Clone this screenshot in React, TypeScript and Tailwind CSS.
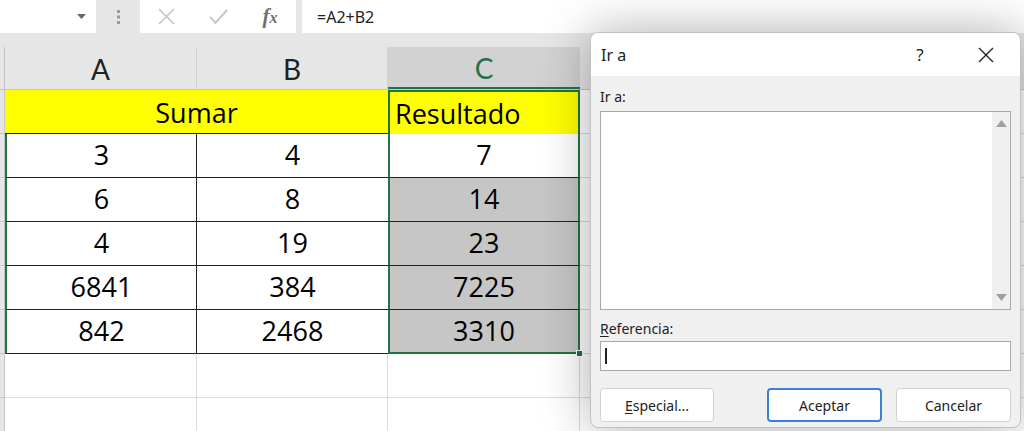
import React from "react";

const rows: [string, string, string][] = [
  ["3", "4", "7"],
  ["6", "8", "14"],
  ["4", "19", "23"],
  ["6841", "384", "7225"],
  ["842", "2468", "3310"],
];

const cellFont = { fontFamily: '"Open Sans", "Noto Sans", sans-serif' };

function FormulaBar() {
  return (
    <div className="h-[47px] bg-[#e6e6e6] flex items-start">
      <div className="w-[96px] h-[33px] bg-white flex items-center justify-end pr-[10px]">
        <svg width="9" height="5" viewBox="0 0 9 5"><path d="M0 0h9L4.5 5z" fill="#666" /></svg>
      </div>
      <div className="w-[44px] h-[33px] flex items-center justify-center">
        <svg width="3" height="14" viewBox="0 0 3 14">
          <rect x="0" y="0" width="3" height="3" fill="#9a9a9a" />
          <rect x="0" y="5.5" width="3" height="3" fill="#9a9a9a" />
          <rect x="0" y="11" width="3" height="3" fill="#9a9a9a" />
        </svg>
      </div>
      <div className="w-[156px] h-[33px] bg-white flex items-center">
        <div className="w-[52px] flex justify-center pl-[1px]">
          <svg width="17" height="17" viewBox="0 0 17 17"><path d="M1 1L16 16M16 1L1 16" stroke="#c6c6c6" strokeWidth="1.7" /></svg>
        </div>
        <div className="w-[52px] flex justify-center">
          <svg width="19" height="15" viewBox="0 0 19 15"><path d="M1 8L6.5 14L18 1" stroke="#c6c6c6" strokeWidth="1.9" fill="none" /></svg>
        </div>
        <div className="w-[52px] flex justify-center">
          <span className="text-[21px] italic font-bold text-[#707070] leading-none" style={{ fontFamily: '"Liberation Serif", serif' }}>
            f<span className="text-[16px]">x</span>
          </span>
        </div>
      </div>
      <div className="w-[6px]" />
      <div className="flex-1 h-[33px] bg-white flex items-center pl-[15px] text-[16px] text-[#222]" style={{ fontFamily: '"Noto Sans", sans-serif' }}>
        =A2+B2
      </div>
    </div>
  );
}

function App() {
  return (
    <div className="w-[1024px] h-[431px] relative overflow-hidden bg-white" style={{ fontFamily: 'Lato, "Noto Sans", sans-serif' }}>
      <FormulaBar />
      {/* Column headers */}
      <div className="flex h-[43px] bg-[#e6e6e6] border-b border-[#c6c6c6]">
        <div className="w-[5px] border-r border-[#c6c6c6]" />
        <div className="w-[192px] border-r border-[#d0d0d0] flex items-center justify-center text-[28px] text-[#222] pt-[2px]">A</div>
        <div className="w-[191px] border-r border-[#d0d0d0] flex items-center justify-center text-[28px] text-[#222] pt-[2px]">B</div>
        <div className="w-[192px] bg-[#d2d2d2] border-b-2 border-[#217346] flex items-center justify-center text-[28px] text-[#217346] pt-[2px]">C</div>
        <div className="flex-1" />
      </div>
      {/* Grid */}
      <div className="flex" style={cellFont}>
        <div className="w-[5px] bg-[#e6e6e6] flex flex-col">
          {Array.from({ length: 8 }).map((_, i) => (
            <div key={i} className="h-[44px] border-b border-r border-[#c6c6c6]" />
          ))}
        </div>
        <div className="flex flex-col">
          {/* Row 1 */}
          <div className="flex h-[44px]">
            <div className="w-[383px] bg-[#ffff00] border-b-[1.5px] border-[#222] flex items-center justify-center text-[27px] text-black pt-[3px]">Sumar</div>
            <div className="w-[192px] bg-[#ffff00] border-2 border-b-0 border-[#217346] flex items-center pl-[5px] text-[27px] text-black pt-[3px]">Resultado</div>
          </div>
          {rows.map((r, i) => (
            <div key={i} className="flex h-[44px]">
              <div className="w-[192px] border-l-2 border-l-[#217346] border-r-[1.5px] border-r-[#222] border-b-[1.5px] border-b-[#222] flex items-center justify-center text-[27px] text-black">{r[0]}</div>
              <div className="w-[191px] border-b-[1.5px] border-[#222] flex items-center justify-center text-[27px] text-black">{r[1]}</div>
              <div className={`w-[192px] border-x-2 border-x-[#217346] ${i === rows.length - 1 ? "border-b-2 border-b-[#217346]" : "border-b-[1.5px] border-b-[#222]"} ${i === 0 ? "bg-white" : "bg-[#c6c6c6]"} flex items-center justify-center text-[27px] text-black relative`}>
                {r[2]}
                {i === rows.length - 1 && (
                  <div className="absolute right-[-5px] bottom-[-5px] w-[7px] h-[7px] bg-[#217346] border border-white" />
                )}
              </div>
            </div>
          ))}
          {[0, 1].map((i) => (
            <div key={i} className="flex h-[44px]">
              <div className="w-[192px] border-r border-b border-[#dadada]" />
              <div className="w-[191px] border-r border-b border-[#dadada]" />
              <div className="w-[192px] border-r border-b border-[#dadada]" />
            </div>
          ))}
        </div>
        <div className="flex-1 flex flex-col">
          {Array.from({ length: 8 }).map((_, i) => (
            <div key={i} className="h-[44px] border-b border-[#dadada]" />
          ))}
        </div>
      </div>

      {/* Dialog */}
      <div
        className="absolute left-[590px] top-[32px] w-[431px] h-[396px] rounded-[8px] overflow-hidden border border-[#c0c0c0] bg-[#f0f0f0] shadow-[0_0_50px_rgba(0,0,0,0.32)] flex flex-col"
        style={{ fontFamily: '"Noto Sans", "Open Sans", sans-serif' }}
      >
        <div className="h-[43px] bg-white flex items-center pl-[10px] pr-[26px] text-[16px] text-[#222]">
          <span className="flex-1 pt-[1px]">Ir a</span>
          <span className="w-[20px] text-center text-[17px] mr-[48px]">?</span>
          <svg width="16" height="16" viewBox="0 0 16 16"><path d="M1 1L15 15M15 1L1 15" stroke="#222" strokeWidth="1.4" /></svg>
        </div>
        <div className="flex-1 px-[9px] pt-[11px] flex flex-col">
          <div className="text-[14px] text-[#222] leading-[20px] h-[24px]">Ir a:</div>
          <div className="h-[199px] border border-[#a8a8a8] bg-white flex">
            <div className="flex-1" />
            <div className="w-[18px] bg-[#f0f0f0] flex flex-col items-center justify-between py-[8px]">
              <svg width="11" height="7" viewBox="0 0 11 7"><path d="M0 7L5.5 0L11 7z" fill="#a0a0a0" /></svg>
              <svg width="11" height="7" viewBox="0 0 11 7"><path d="M0 0L5.5 7L11 0z" fill="#a0a0a0" /></svg>
            </div>
          </div>
          <div className="text-[14px] text-[#222] leading-[20px] mt-[9px] h-[22px]"><span className="underline underline-offset-2">R</span>eferencia:</div>
          <div className="h-[30px] border border-[#a8a8a8] bg-white flex items-center pl-[4px]">
            <div className="w-[1.5px] h-[16px] bg-[#222]" />
          </div>
          <div className="flex mt-[17px] text-[14px] text-[#222]">
            <div className="w-[114px] h-[34px] rounded-[4px] bg-white border border-[#d2d2d2] flex items-center justify-center"><span><span className="underline underline-offset-2">E</span>special...</span></div>
            <div className="w-[53px]" />
            <div className="w-[115px] h-[34px] rounded-[4px] bg-white border-2 border-[#3b82d6] flex items-center justify-center">Aceptar</div>
            <div className="w-[14px]" />
            <div className="w-[115px] h-[34px] rounded-[4px] bg-white border border-[#d2d2d2] flex items-center justify-center">Cancelar</div>
          </div>
        </div>
      </div>
    </div>
  );
}

export default App;
